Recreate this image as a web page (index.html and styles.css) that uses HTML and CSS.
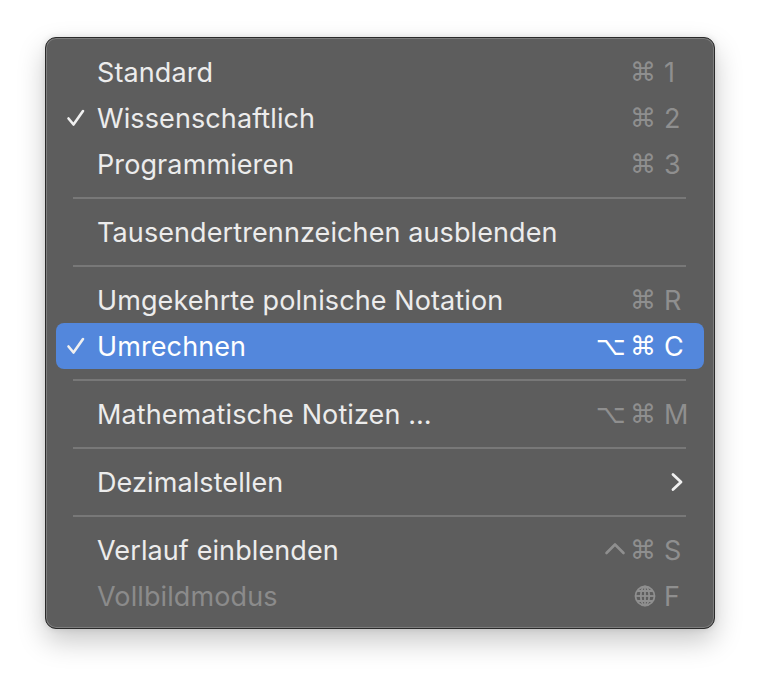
FILE: index.html
```html
<!DOCTYPE html>
<html lang="de">
<head>
<meta charset="utf-8">
<title>Menü</title>
<link rel="stylesheet" href="styles.css">
</head>
<body>
<div class="menu">
  <div class="item">
    <span class="check"></span><span class="label">Standard</span>
    <span class="sc"><span class="mods"><span class="g">⌘</span></span><span class="key">1</span></span>
  </div>
  <div class="item">
    <span class="check"><svg viewBox="0 0 20 18" width="20" height="18"><path d="M2.5 9.5 L7.5 15.5 L17 2" fill="none" stroke="currentColor" stroke-width="2.6" stroke-linecap="round" stroke-linejoin="round"/></svg></span><span class="label">Wissenschaftlich</span>
    <span class="sc"><span class="mods"><span class="g">⌘</span></span><span class="key">2</span></span>
  </div>
  <div class="item">
    <span class="check"></span><span class="label">Programmieren</span>
    <span class="sc"><span class="mods"><span class="g">⌘</span></span><span class="key">3</span></span>
  </div>
  <div class="sep"></div>
  <div class="item">
    <span class="check"></span><span class="label">Tausendertrennzeichen ausblenden</span>
  </div>
  <div class="sep"></div>
  <div class="item">
    <span class="check"></span><span class="label">Umgekehrte polnische Notation</span>
    <span class="sc"><span class="mods"><span class="g">⌘</span></span><span class="key">R</span></span>
  </div>
  <div class="item active">
    <span class="check"><svg viewBox="0 0 20 18" width="20" height="18"><path d="M2.5 9.5 L7.5 15.5 L17 2" fill="none" stroke="currentColor" stroke-width="2.6" stroke-linecap="round" stroke-linejoin="round"/></svg></span><span class="label">Umrechnen</span>
    <span class="sc"><span class="mods"><span class="g">⌥</span><span class="g">⌘</span></span><span class="key">C</span></span>
  </div>
  <div class="sep"></div>
  <div class="item">
    <span class="check"></span><span class="label">Mathematische Notizen …</span>
    <span class="sc"><span class="mods"><span class="g">⌥</span><span class="g">⌘</span></span><span class="key">M</span></span>
  </div>
  <div class="sep"></div>
  <div class="item">
    <span class="check"></span><span class="label">Dezimalstellen</span>
    <span class="sc"><span class="chev"><svg viewBox="0 0 14 20" width="14" height="20"><path d="M3 2.5 L11 10 L3 17.5" fill="none" stroke="currentColor" stroke-width="2.8" stroke-linecap="round" stroke-linejoin="round"/></svg></span></span>
  </div>
  <div class="sep"></div>
  <div class="item">
    <span class="check"></span><span class="label">Verlauf einblenden</span>
    <span class="sc"><span class="mods"><svg class="caret" viewBox="0 0 22 20" width="22" height="20"><path d="M2.5 13 L11 4.5 L19.5 13" fill="none" stroke="currentColor" stroke-width="2.6" stroke-linecap="round" stroke-linejoin="round"/></svg><span class="g">⌘</span></span><span class="key">S</span></span>
  </div>
  <div class="item disabled">
    <span class="check"></span><span class="label">Vollbildmodus</span>
    <span class="sc"><span class="mods"><svg class="globe" viewBox="0 0 22 22" width="22" height="22"><g fill="none" stroke="currentColor" stroke-width="1.8"><circle cx="11" cy="11" r="9.5"/><ellipse cx="11" cy="11" rx="4.2" ry="9.5"/><line x1="11" y1="1.5" x2="11" y2="20.5"/><line x1="1.5" y1="11" x2="20.5" y2="11"/><path d="M3.2 6 H18.8 M3.2 16 H18.8"/></g></svg></span><span class="key">F</span></span>
  </div>
</div>
</body>
</html>
```
FILE: styles.css
```css
html, body {
  margin: 0;
  padding: 0;
  background: #ffffff;
}

body {
  font-family: Inter, "Liberation Sans", sans-serif;
  width: 760px;
  height: 682px;
  overflow: hidden;
}

.menu {
  margin: 37px 0 0 45px;
  width: 670px;
  box-sizing: border-box;
  background: #5d5d5d;
  border: 1px solid #2a2a2a;
  border-radius: 11px;
  box-shadow: inset 0 0 0 1px rgba(255, 255, 255, 0.2), 0 12px 28px rgba(0, 0, 0, 0.22), 0 0 6px rgba(0, 0, 0, 0.1);
  padding: 11px 10px 9px 10px;
  display: flex;
  flex-direction: column;
}

.item {
  height: 46px;
  display: flex;
  align-items: center;
  border-radius: 8px;
  color: #ececec;
  font-size: 27px;
  letter-spacing: 0.1px;
  padding-right: 10px;
}

.check {
  width: 41px;
  flex: none;
  display: flex;
  align-items: center;
  padding-left: 10px;
  box-sizing: border-box;
  color: #f0f0f0;
}

.check svg {
  display: block;
}

.label {
  flex: 1;
  white-space: nowrap;
}

.sc {
  display: flex;
  align-items: center;
  color: #8f8f8f;
}

.mods {
  display: flex;
  align-items: center;
  gap: 4px;
  padding-right: 8px;
}

.g {
  font-family: "DejaVu Sans", sans-serif;
  font-size: 26px;
  line-height: 1;
}

.key {
  width: 30px;
  font-size: 27px;
}

.chev {
  color: #f0f0f0;
  display: flex;
  padding-right: 10px;
}

.chev svg,
.globe,
.caret {
  display: block;
}

.sep {
  height: 22px;
  display: flex;
  align-items: center;
  padding: 0 18px 0 17px;
}

.sep::before {
  content: "";
  flex: 1;
  height: 2px;
  background: #787878;
}

.active {
  background: #5387dc;
  color: #ffffff;
}

.active .sc {
  color: #ffffff;
}

.disabled {
  color: #8b8b8b;
}
```
